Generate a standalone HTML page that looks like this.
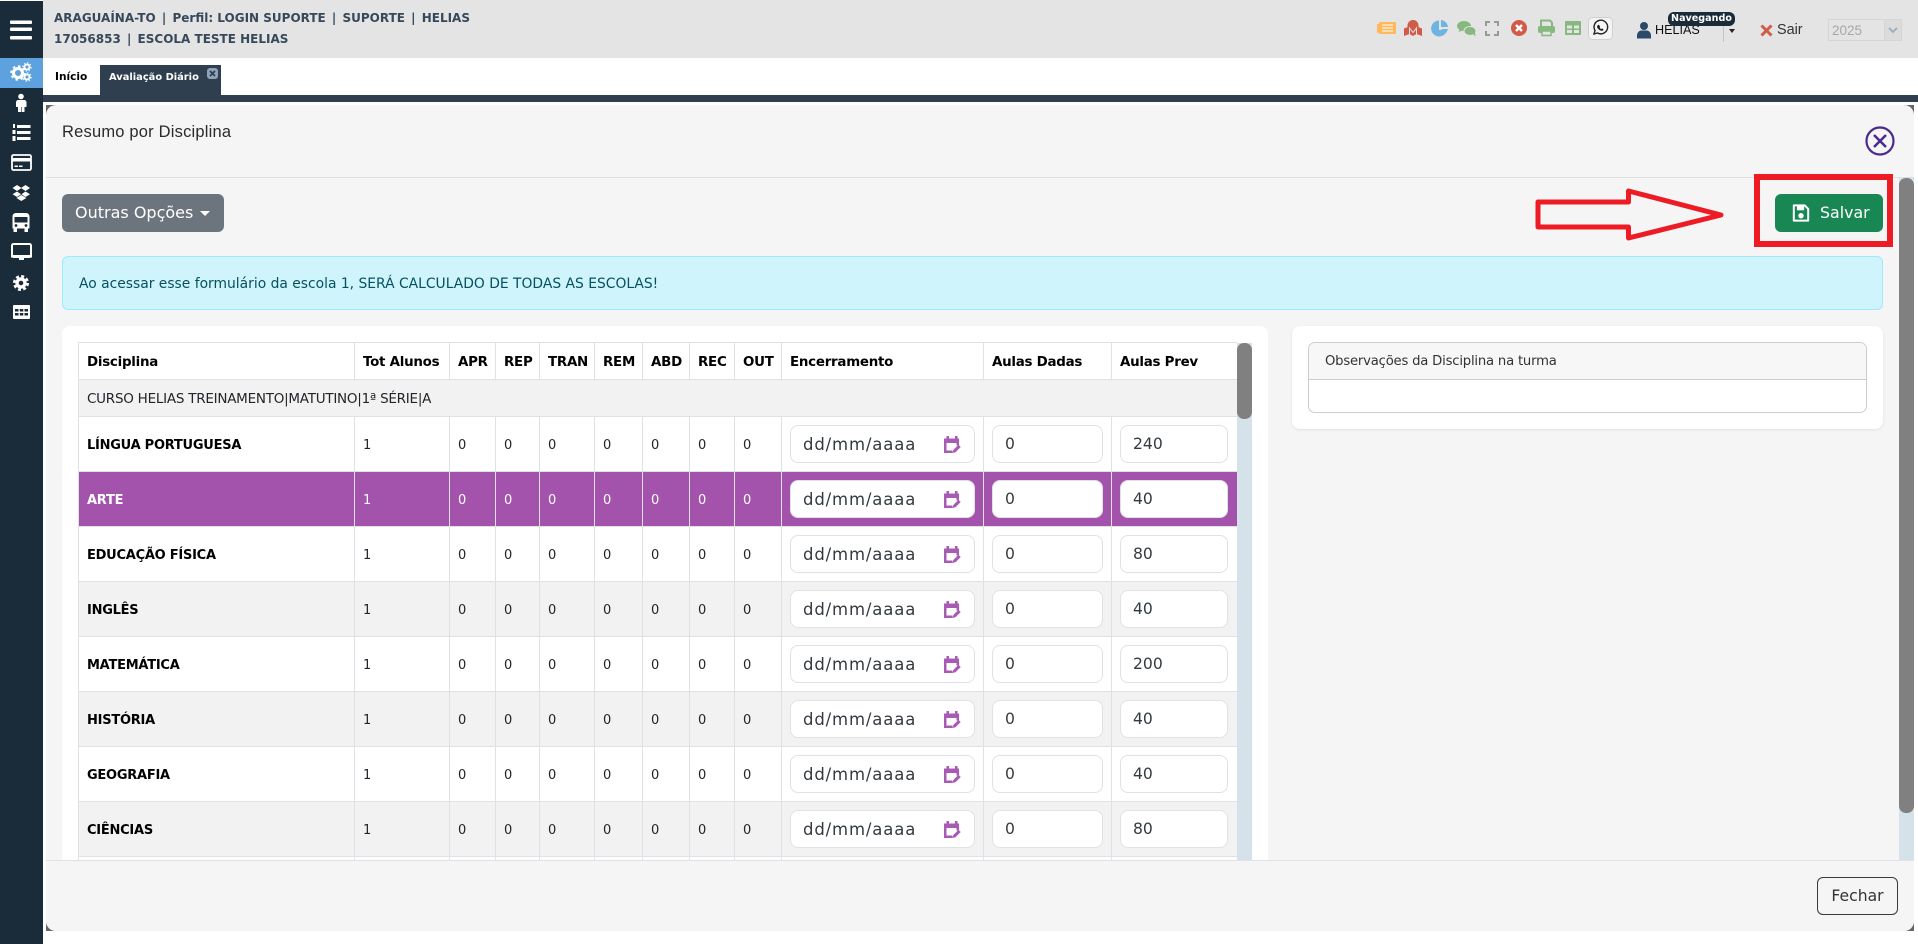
<!DOCTYPE html>
<html lang="pt-BR">
<head>
<meta charset="utf-8">
<title>Resumo por Disciplina</title>
<style>
*{box-sizing:border-box}
html,body{margin:0;padding:0;width:1918px;height:944px;overflow:hidden;background:#fff;font-family:"DejaVu Sans","Liberation Sans",sans-serif;color:#212529}
.a{position:absolute}
#side{left:0;top:1px;width:43px;height:943px;background:#1a2b3a}
#top{left:43px;top:0;width:1875px;height:58px;background:#e4e4e4}
.ht{left:54px;font-weight:700;font-size:12px;color:#36485a;white-space:nowrap;line-height:16px}
.ht i{font-style:normal;margin:0 2px}
#modal{left:46px;top:105px;width:1868px;height:826px;background:#f5f5f5;border-radius:10px;overflow:hidden}
.corner{width:12px;height:12px;background:#666}
table{border-collapse:collapse;table-layout:fixed;width:1159px}
td,th{border:1px solid #dee2e6;padding:0 0 0 8px;font-size:13px;text-align:left;white-space:nowrap;overflow:hidden;color:#212529;font-weight:400}
th{font-weight:700;font-size:13.4px;letter-spacing:-.25px;color:#000;background:#fff;height:37px;padding-top:2px}
tr.g td{background:#f2f2f2;height:37px;font-size:13.5px;letter-spacing:-.25px;overflow:visible;padding-top:1px}
tr.r td{background:#fff;height:55px;position:relative;padding-top:2px}
tr.s td{background:#f2f2f2}
tr.p td{background:#a453ac;color:#fff}
td.n{font-weight:700;font-size:13px;letter-spacing:-.25px;color:#000}
tr.p td.n{color:#fff}
.f{position:absolute;top:8px;height:38px;background:#fff;border:1px solid #dee2e6;border-radius:8px;font-size:15.6px;line-height:37px;color:#343a40;padding-left:12px;white-space:nowrap}
.d{left:8px;width:185px;font-size:16.5px;letter-spacing:.85px}
.v{left:8px;width:111px}
.w{left:8px;width:108px}
.f svg{position:absolute;left:152px;top:8px}
</style>
</head>
<body>
<svg width="0" height="0" style="position:absolute">
<symbol id="cal" viewBox="0 0 18 20">
<path d="M1 4.500h2.500V2h2.500v2.500h6V2h2.500v2.500H16v7h-2.500V9H3.500v7.500h6V19H1z" fill="#a85bb5"/>
<path d="M9.500 19l.8-3 5.200-5.200 2.200 2.200-5.200 5.200z" fill="#a85bb5"/>
</symbol>
</svg>

<div id="top" class="a"></div>
<div class="a" style="left:43px;top:58px;width:1875px;height:37px;background:#fff"></div>
<div class="a" style="left:43px;top:95px;width:1875px;height:7px;background:#303f4f"></div>

<div class="a ht" style="top:10px">ARAGUAÍNA-TO <i>|</i> Perfil: LOGIN SUPORTE <i>|</i> SUPORTE <i>|</i> HELIAS</div>
<div class="a ht" style="top:31px">17056853 <i>|</i> ESCOLA TESTE HELIAS</div>

<div class="a" style="left:55px;top:71px;font-size:10.6px;font-weight:700;color:#000;white-space:nowrap">Início</div>
<div class="a" style="left:100px;top:65px;width:121px;height:30px;background:#303f4f"></div>
<div class="a" style="left:109px;top:72px;font-size:9.9px;font-weight:700;color:#fff;white-space:nowrap">Avaliação Diário</div>
<svg class="a" style="left:207px;top:68px" width="11" height="11" viewBox="0 0 11 11"><rect width="11" height="11" rx="3" fill="#8fa3b8"/><path d="M3 3l5 5M8 3l-5 5" stroke="#303f4f" stroke-width="1.8"/></svg>

<!-- top right icons -->
<svg class="a" style="left:1370px;top:14px" width="260" height="30" viewBox="1370 14 260 30">
<rect x="1379" y="22" width="17" height="12" rx="1" fill="#ffb85c"/><path d="M1377 24h2v8a1 1 0 0 1-2 0z" fill="#ffb85c"/><path d="M1382 25h11M1382 28h11M1382 31h11" stroke="#fff" stroke-width="1"/>
<path d="M1413 20a5.500 5.500 0 0 0-5.500 5.500c0 .5 0 1 .2 1.500l-3.700 1.500v7.500l5.500-2 3.500 2 3.500-2 5.500 2v-7.500l-3.700-1.500c.2-.5.2-1 .2-1.500a5.500 5.500 0 0 0-5.500-5.500z" fill="#d15b47"/><path d="M1409.500 34v-6l3.500 4.500 3.500-4.500v6" stroke="#e4e4e4" stroke-width="1" fill="none"/>
<path d="M1439 20.500a8 8 0 1 0 8 9.500h-8z" fill="#6fb3e0"/><path d="M1441 20a8 8 0 0 1 7 7h-7z" fill="#6fb3e0"/><path d="M1441 29h7l-1.500 3.500z" fill="#6fb3e0"/>
<ellipse cx="1464" cy="26" rx="7" ry="5" fill="#87b87f"/><path d="M1460 29l-1.500 3 4-1.500z" fill="#87b87f"/><ellipse cx="1470" cy="31" rx="6" ry="4.500" fill="#87b87f" stroke="#e4e4e4"/><path d="M1473 34l2.500 2.500-.5-4z" fill="#87b87f"/>
<path d="M1486 26v-4h4M1494 22h4v4M1498 31v4h-4M1490 35h-4v-4" stroke="#999" stroke-width="2" fill="none"/>
<circle cx="1519" cy="28" r="8" fill="#d15b47"/><path d="M1516 25l6 6M1522 25l-6 6" stroke="#fff" stroke-width="2.400"/>
<path d="M1541 27v-6.500h9l2 2V27" stroke="#87b87f" stroke-width="2" fill="none"/><rect x="1538" y="26" width="17" height="7" rx="2" fill="#87b87f"/><rect x="1542" y="31" width="9" height="4.500" fill="#e4e4e4" stroke="#87b87f" stroke-width="1.500"/>
<rect x="1565" y="21" width="16" height="14" rx="1" fill="#87b87f"/><path d="M1567 25.500h5v3h-5zM1574 25.500h5v3h-5zM1567 30h5v3h-5zM1574 30h5v3h-5z" fill="#e4e4e4"/>
<rect x="1588.500" y="17.500" width="24" height="22" rx="4" fill="#f4f4f4" stroke="#d0d0d0"/>
<path d="M1594 34l1-3.500a6.800 6.800 0 1 1 2.600 2.500z" fill="none" stroke="#222" stroke-width="1.400"/><path d="M1598 25c1-1 1.500 1 2 1.500s-.7 1 0 1.700 1.300 1 1.800.4 2 1 1.500 1.600c-1.500 1.300-3.500.3-5-1.200s-1.500-3-.3-4z" fill="#222"/>
</svg>
<svg class="a" style="left:1636px;top:21px" width="16" height="18" viewBox="0 0 16 18"><circle cx="8" cy="5" r="4" fill="#2b4a6a"/><path d="M1 17.500v-3c0-3 2.500-5 4-5h6c1.500 0 4 2 4 5v3z" fill="#2b4a6a"/></svg>
<div class="a" style="left:1655px;top:23px;font-family:'Liberation Sans',sans-serif;font-size:12.6px;line-height:15px;color:#111;white-space:nowrap">HELIAS</div>
<div class="a" style="left:1723px;top:25px;width:1px;height:17px;background:#c4c4c4"></div>
<div class="a" style="left:1729px;top:29px;border:3px solid transparent;border-top:4px solid #222"></div>
<div class="a" style="left:1668px;top:12px;width:67px;height:14px;background:#1a2b3a;border-radius:6px;color:#fff;font-size:9.6px;font-weight:700;text-align:center;line-height:14px">Navegando</div>
<svg class="a" style="left:1760px;top:24px" width="13" height="13" viewBox="0 0 13 13"><path d="M1.500 1.500l10 10M11.500 1.500l-10 10" stroke="#d15b47" stroke-width="3"/></svg>
<div class="a" style="left:1777px;top:22px;font-family:'Liberation Sans',sans-serif;font-size:14.4px;line-height:17px;color:#333;white-space:nowrap">Sair</div>
<div class="a" style="left:1828px;top:19px;width:74px;height:22px;border:1px solid #d5d5d5;background:#e4e4e4"></div>
<div class="a" style="left:1884px;top:20px;width:17px;height:20px;background:#dcdcdc;border-left:1px solid #d5d5d5"></div>
<div class="a" style="left:1832px;top:22px;font-family:'Liberation Sans',sans-serif;font-size:13.5px;line-height:17px;color:#a8a8a8">2025</div>
<svg class="a" style="left:1888px;top:27px" width="10" height="7" viewBox="0 0 10 7"><path d="M1 1l4 4 4-4" stroke="#9fb0c0" stroke-width="2" fill="none"/></svg>

<!-- sidebar -->
<div id="side" class="a"></div>
<div class="a" style="left:0;top:58px;width:43px;height:30px;background:#5da2de"></div>
<svg class="a" style="left:0;top:0" width="43" height="330" viewBox="0 0 43 330" fill="#fff">
<rect x="10" y="20.500" width="22" height="3.500" rx="1"/><rect x="10" y="27.500" width="22" height="3.500" rx="1"/><rect x="10" y="36" width="22" height="3.500" rx="1"/>
<circle cx="18" cy="73" r="4.500" fill="none" stroke="#fff" stroke-width="3"/><circle cx="18" cy="73" r="6.800" fill="none" stroke="#fff" stroke-width="2" stroke-dasharray="2.500 2.800"/>
<circle cx="27" cy="67" r="2.500" fill="none" stroke="#fff" stroke-width="1.800"/><circle cx="27" cy="67" r="4" fill="none" stroke="#fff" stroke-width="1.200" stroke-dasharray="1.500 1.600"/>
<circle cx="27" cy="77" r="2.500" fill="none" stroke="#fff" stroke-width="1.800"/><circle cx="27" cy="77" r="4" fill="none" stroke="#fff" stroke-width="1.200" stroke-dasharray="1.500 1.600"/>
<circle cx="21" cy="96.500" r="2.800"/><path d="M18 100h6c1.500 0 2.500 1 2.500 2.500v4.500h-2v5h-2.700v-5h-.6v5H18v-5h-2v-4.500c0-1.500 1-2.500 2-2.500z"/>
<rect x="17" y="125" width="13.500" height="3"/><rect x="17" y="131" width="13.500" height="3"/><rect x="17" y="137" width="13.500" height="3"/>
<rect x="13" y="124" width="2" height="4"/><rect x="12.500" y="130" width="3" height="4"/><rect x="12.500" y="136" width="3" height="5"/>
<rect x="12" y="155" width="19" height="15" rx="1.500" fill="none" stroke="#fff" stroke-width="1.800"/><rect x="12" y="158" width="19" height="3.500"/><rect x="14.500" y="165.500" width="3.500" height="1.500"/><rect x="19" y="165.500" width="3.500" height="1.500"/>
<path d="M17 185l4.500 3-4.500 3-4.500-3zM25.500 185l4.500 3-4.500 3-4.500-3zM17 191.500l4 2.800-4 2.700-4.500-2.800zM25.500 191.500l4.500 2.700-4.500 2.800-4-2.700zM16.500 198l4.800-3 5 3-5 3z"/>
<path d="M16 213h10c2 0 3.500 1.500 3.500 3.500v12h-1.500v3.500h-3.500v-3.500h-7.500v3.500H13.500v-3.500H12.500v-12c0-2 1.500-3.500 3.500-3.500z"/><rect x="14.500" y="217" width="13" height="5.500" fill="#1a2b3a"/><circle cx="16" cy="225.500" r="1.400" fill="#1a2b3a"/><circle cx="26" cy="225.500" r="1.400" fill="#1a2b3a"/>
<rect x="12" y="244" width="19" height="13" rx="1.500" fill="none" stroke="#fff" stroke-width="2"/><path d="M11 255h21v2.500H11zM19 257h5v3h-5z"/>
<circle cx="21" cy="283" r="4" fill="none" stroke="#fff" stroke-width="3.400"/><circle cx="21" cy="283" r="6.800" fill="none" stroke="#fff" stroke-width="2.400" stroke-dasharray="3 2.340"/>
<rect x="13" y="305" width="17" height="14" rx="1"/>
<path d="M15 309h3.500v2.500H15zM19.800 309h3.500v2.500h-3.500zM24.500 309h3.500v2.500H24.500zM15 313h3.500v2.500H15zM19.800 313h3.500v2.500h-3.500zM24.500 313h3.500v2.500H24.500z" fill="#1a2b3a"/>
</svg>

<!-- modal corners -->
<div class="a corner" style="left:46px;top:105px"></div>
<div class="a corner" style="left:1902px;top:105px"></div>
<div class="a corner" style="left:46px;top:919px"></div>
<div class="a corner" style="left:1902px;top:919px"></div>

<div id="modal" class="a">
  <div class="a" style="left:16px;top:17px;font-family:'Liberation Sans',sans-serif;font-size:16.5px;letter-spacing:.2px;line-height:20px;color:#2b2b2b;white-space:nowrap">Resumo por Disciplina</div>
  <svg class="a" style="left:1819px;top:21px" width="30" height="30" viewBox="0 0 30 30"><circle cx="15" cy="15" r="13.500" fill="none" stroke="#4b2a8e" stroke-width="2.200"/><path d="M9 9l12 12M21 9l-12 12" stroke="#4b2a8e" stroke-width="2.500"/></svg>
  <div class="a" style="left:0;top:72px;width:1868px;height:1px;background:#dedede"></div>

  <div class="a" style="left:16px;top:89px;width:162px;height:38px;background:#6c757d;border-radius:6px;color:#fff;font-size:16px;line-height:38px;padding-left:13px;white-space:nowrap">Outras Opções</div>
  <div class="a" style="left:154px;top:106px;border:5px solid transparent;border-top:5px solid #fff;border-bottom:0"></div>

  <svg class="a" style="left:1481px;top:80px" width="200" height="60" viewBox="1526 185 200 60"><path d="M1537 202h90.500v-11l92.500 24-92.500 23v-11H1537z" fill="none" stroke="#ed1c24" stroke-width="5" stroke-linejoin="round"/></svg>

  <div class="a" style="left:1729px;top:89px;width:108px;height:38px;background:#198754;border-radius:6px;color:#fff;font-size:15.8px;line-height:37px;padding-left:45px">Salvar</div>
  <svg class="a" style="left:1746px;top:99px" width="18" height="18" viewBox="0 0 19 20"><path d="M1.500 1.500h12l4 4v13h-16z" fill="none" stroke="#fff" stroke-width="2.200" stroke-linejoin="round"/><rect x="5" y="2" width="8" height="5" fill="#fff"/><circle cx="9.500" cy="13" r="3" fill="#fff"/></svg>
  <div class="a" style="left:1708px;top:69px;width:139px;height:73px;border:6px solid #ed1c24"></div>

  <div class="a" style="left:16px;top:151px;width:1821px;height:54px;background:#cff4fc;border:1px solid #9eeaf9;border-radius:6px;color:#055160;font-size:13.87px;line-height:54px;padding-left:16px;white-space:nowrap">Ao acessar esse formulário da escola 1, SERÁ CALCULADO DE TODAS AS ESCOLAS!</div>

  <div class="a" style="left:16px;top:221px;width:1206px;height:560px;background:#fff;border-radius:8px"></div>
  <div class="a" style="left:1246px;top:221px;width:591px;height:103px;background:#fff;border-radius:8px;box-shadow:0 1px 3px rgba(0,0,0,.08)"></div>
  <div class="a" style="left:1262px;top:237px;width:559px;height:71px;background:#fff;border:1px solid #ccc;border-radius:7px;overflow:hidden">
    <div style="height:37px;background:#f7f7f7;border-bottom:1px solid #ccc;font-size:13.2px;line-height:37px;padding-left:16px;color:#333;white-space:nowrap;letter-spacing:-.2px">Observações da Disciplina na turma</div>
  </div>

  <!-- table -->
  <div class="a" style="left:32px;top:237px;width:1159px;height:518px;overflow:hidden">
  <table>
    <colgroup><col style="width:276px"><col style="width:95px"><col style="width:46px"><col style="width:44px"><col style="width:55px"><col style="width:48px"><col style="width:47px"><col style="width:45px"><col style="width:47px"><col style="width:202px"><col style="width:128px"><col style="width:126px"></colgroup>
    <tr><th>Disciplina</th><th>Tot Alunos</th><th>APR</th><th>REP</th><th>TRAN</th><th>REM</th><th>ABD</th><th>REC</th><th>OUT</th><th>Encerramento</th><th>Aulas Dadas</th><th>Aulas Prev</th></tr>
    <tr class="g"><td colspan="12">CURSO HELIAS TREINAMENTO|MATUTINO|1ª SÉRIE|A</td></tr>
    <tr class="r"><td class="n">LÍNGUA PORTUGUESA</td><td>1</td><td>0</td><td>0</td><td>0</td><td>0</td><td>0</td><td>0</td><td>0</td><td><div class="f d">dd/mm/aaaa<svg width="18" height="20"><use href="#cal"/></svg></div></td><td><div class="f v">0</div></td><td><div class="f w">240</div></td></tr>
    <tr class="r p"><td class="n">ARTE</td><td>1</td><td>0</td><td>0</td><td>0</td><td>0</td><td>0</td><td>0</td><td>0</td><td><div class="f d">dd/mm/aaaa<svg width="18" height="20"><use href="#cal"/></svg></div></td><td><div class="f v">0</div></td><td><div class="f w">40</div></td></tr>
    <tr class="r"><td class="n">EDUCAÇÃO FÍSICA</td><td>1</td><td>0</td><td>0</td><td>0</td><td>0</td><td>0</td><td>0</td><td>0</td><td><div class="f d">dd/mm/aaaa<svg width="18" height="20"><use href="#cal"/></svg></div></td><td><div class="f v">0</div></td><td><div class="f w">80</div></td></tr>
    <tr class="r s"><td class="n">INGLÊS</td><td>1</td><td>0</td><td>0</td><td>0</td><td>0</td><td>0</td><td>0</td><td>0</td><td><div class="f d">dd/mm/aaaa<svg width="18" height="20"><use href="#cal"/></svg></div></td><td><div class="f v">0</div></td><td><div class="f w">40</div></td></tr>
    <tr class="r"><td class="n">MATEMÁTICA</td><td>1</td><td>0</td><td>0</td><td>0</td><td>0</td><td>0</td><td>0</td><td>0</td><td><div class="f d">dd/mm/aaaa<svg width="18" height="20"><use href="#cal"/></svg></div></td><td><div class="f v">0</div></td><td><div class="f w">200</div></td></tr>
    <tr class="r s"><td class="n">HISTÓRIA</td><td>1</td><td>0</td><td>0</td><td>0</td><td>0</td><td>0</td><td>0</td><td>0</td><td><div class="f d">dd/mm/aaaa<svg width="18" height="20"><use href="#cal"/></svg></div></td><td><div class="f v">0</div></td><td><div class="f w">40</div></td></tr>
    <tr class="r"><td class="n">GEOGRAFIA</td><td>1</td><td>0</td><td>0</td><td>0</td><td>0</td><td>0</td><td>0</td><td>0</td><td><div class="f d">dd/mm/aaaa<svg width="18" height="20"><use href="#cal"/></svg></div></td><td><div class="f v">0</div></td><td><div class="f w">40</div></td></tr>
    <tr class="r s"><td class="n">CIÊNCIAS</td><td>1</td><td>0</td><td>0</td><td>0</td><td>0</td><td>0</td><td>0</td><td>0</td><td><div class="f d">dd/mm/aaaa<svg width="18" height="20"><use href="#cal"/></svg></div></td><td><div class="f v">0</div></td><td><div class="f w">80</div></td></tr>
    <tr class="r"><td></td><td></td><td></td><td></td><td></td><td></td><td></td><td></td><td></td><td></td><td></td><td></td></tr>
  </table>
  </div>
  <!-- table scrollbar -->
  <div class="a" style="left:1191px;top:238px;width:15px;height:517px;background:#d5e2ea"></div>
  <div class="a" style="left:1191px;top:238px;width:15px;height:76px;background:#808080;border-radius:7px"></div>
  <!-- main scrollbar -->
  <div class="a" style="left:1853px;top:72px;width:15px;height:683px;background:#d5e2ea"></div>
  <div class="a" style="left:1853px;top:73px;width:15px;height:635px;background:#808080;border-radius:7px"></div>

  <!-- footer -->
  <div class="a" style="left:0;top:755px;width:1868px;height:71px;background:#f5f5f5;border-top:1px solid #dee2e6"></div>
  <div class="a" style="left:1771px;top:772px;width:81px;height:38px;border:1px solid #343a40;border-radius:6px;font-size:15.6px;line-height:36px;text-align:center;color:#333">Fechar</div>
</div>
</body>
</html>
